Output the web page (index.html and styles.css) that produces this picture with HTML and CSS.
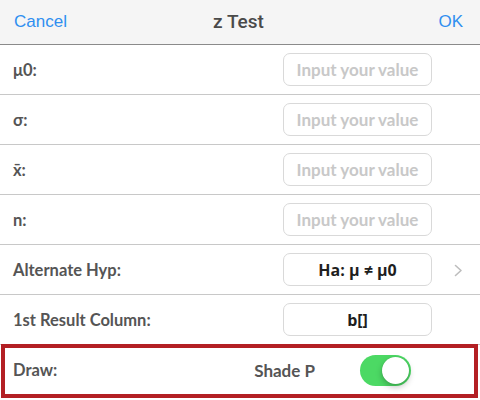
FILE: index.html
```html
<!DOCTYPE html>
<html>
<head>
<meta charset="utf-8">
<link rel="stylesheet" href="styles.css">
</head>
<body>
<div class="screen">
  <header class="nav">
    <span class="nav-btn nav-left">Cancel</span>
    <span class="nav-title">z Test</span>
    <span class="nav-btn nav-right">OK</span>
  </header>
  <div class="row">
    <span class="label">μ0:</span>
    <span class="field placeholder">Input your value</span>
  </div>
  <div class="row">
    <span class="label">σ:</span>
    <span class="field placeholder">Input your value</span>
  </div>
  <div class="row">
    <span class="label">x̄:</span>
    <span class="field placeholder">Input your value</span>
  </div>
  <div class="row">
    <span class="label">n:</span>
    <span class="field placeholder">Input your value</span>
  </div>
  <div class="row">
    <span class="label">Alternate Hyp:</span>
    <span class="field value">Ha: μ ≠ μ0</span>
    <span class="chev"><svg width="9" height="13" viewBox="0 0 9 13"><polyline points="1.5,1.5 7,6.5 1.5,11.5" fill="none" stroke="#bdbdbd" stroke-width="1.6" stroke-linecap="round" stroke-linejoin="round"/></svg></span>
  </div>
  <div class="row">
    <span class="label">1st Result Column:</span>
    <span class="field value">b[]</span>
  </div>
  <div class="row row-draw">
    <span class="label">Draw:</span>
    <span class="option">Shade P</span>
    <span class="toggle on"><span class="knob"></span></span>
  </div>
</div>
</body>
</html>
```
FILE: styles.css
```css
html, body {
  margin: 0;
  padding: 0;
  background: #ffffff;
}
.screen {
  width: 480px;
  height: 400px;
  overflow: hidden;
  font-family: "Lato", "Open Sans", sans-serif;
}
.nav {
  height: 43px;
  background: #f5f5f5;
  border-bottom: 1px solid #8a8a8a;
  display: grid;
  grid-template-columns: 1fr auto 1fr;
  align-items: center;
  padding: 0 17px 1px 14px;
  font-family: "Liberation Sans", Arial, sans-serif;
}
.nav-btn {
  color: #2f8ff0;
  font-size: 17px;
}
.nav-right {
  justify-self: end;
}
.nav-title {
  color: #4a4a4a;
  font-family: "Roboto", "Liberation Sans", sans-serif;
  font-size: 19px;
  font-weight: 500;
}
.row {
  height: 49px;
  border-bottom: 1px solid #c8c8c8;
  display: grid;
  grid-template-columns: 1fr 149px 48px;
  align-items: center;
  padding-left: 13px;
}
.label {
  font-weight: 700;
  font-size: 16.5px;
  color: #555555;
}
.field {
  height: 31px;
  border: 1px solid #d9d9d9;
  border-radius: 7px;
  display: flex;
  align-items: center;
  justify-content: center;
  box-sizing: content-box;
}
.placeholder {
  color: #c8c8c8;
  font-weight: 700;
  font-size: 17px;
}
.value {
  color: #1e1e1e;
  font-family: "Open Sans", sans-serif;
  font-weight: 700;
  font-size: 16px;
}
.chev {
  display: flex;
  padding-left: 22px;
  padding-top: 1px;
}
.row-draw {
  position: relative;
  border-bottom: none;
  height: 50px;
  grid-template-columns: 1fr auto 51px;
  column-gap: 45px;
  padding-right: 69px;
}
.row-draw::after {
  content: "";
  position: absolute;
  left: 1px;
  right: 2px;
  top: -1px;
  bottom: -3px;
  border: 4px solid #b31f24;
}
.option {
  font-weight: 700;
  font-size: 17px;
  color: #555555;
}
.toggle {
  width: 51px;
  height: 31px;
  border-radius: 16px;
  background: #4cd964;
  position: relative;
  display: block;
}
.knob {
  position: absolute;
  top: 2px;
  right: 2px;
  width: 27px;
  height: 27px;
  border-radius: 50%;
  background: #ffffff;
  box-shadow: 0 3px 6px rgba(0,0,0,0.25), 0 0 1px rgba(0,0,0,0.2);
}
```
